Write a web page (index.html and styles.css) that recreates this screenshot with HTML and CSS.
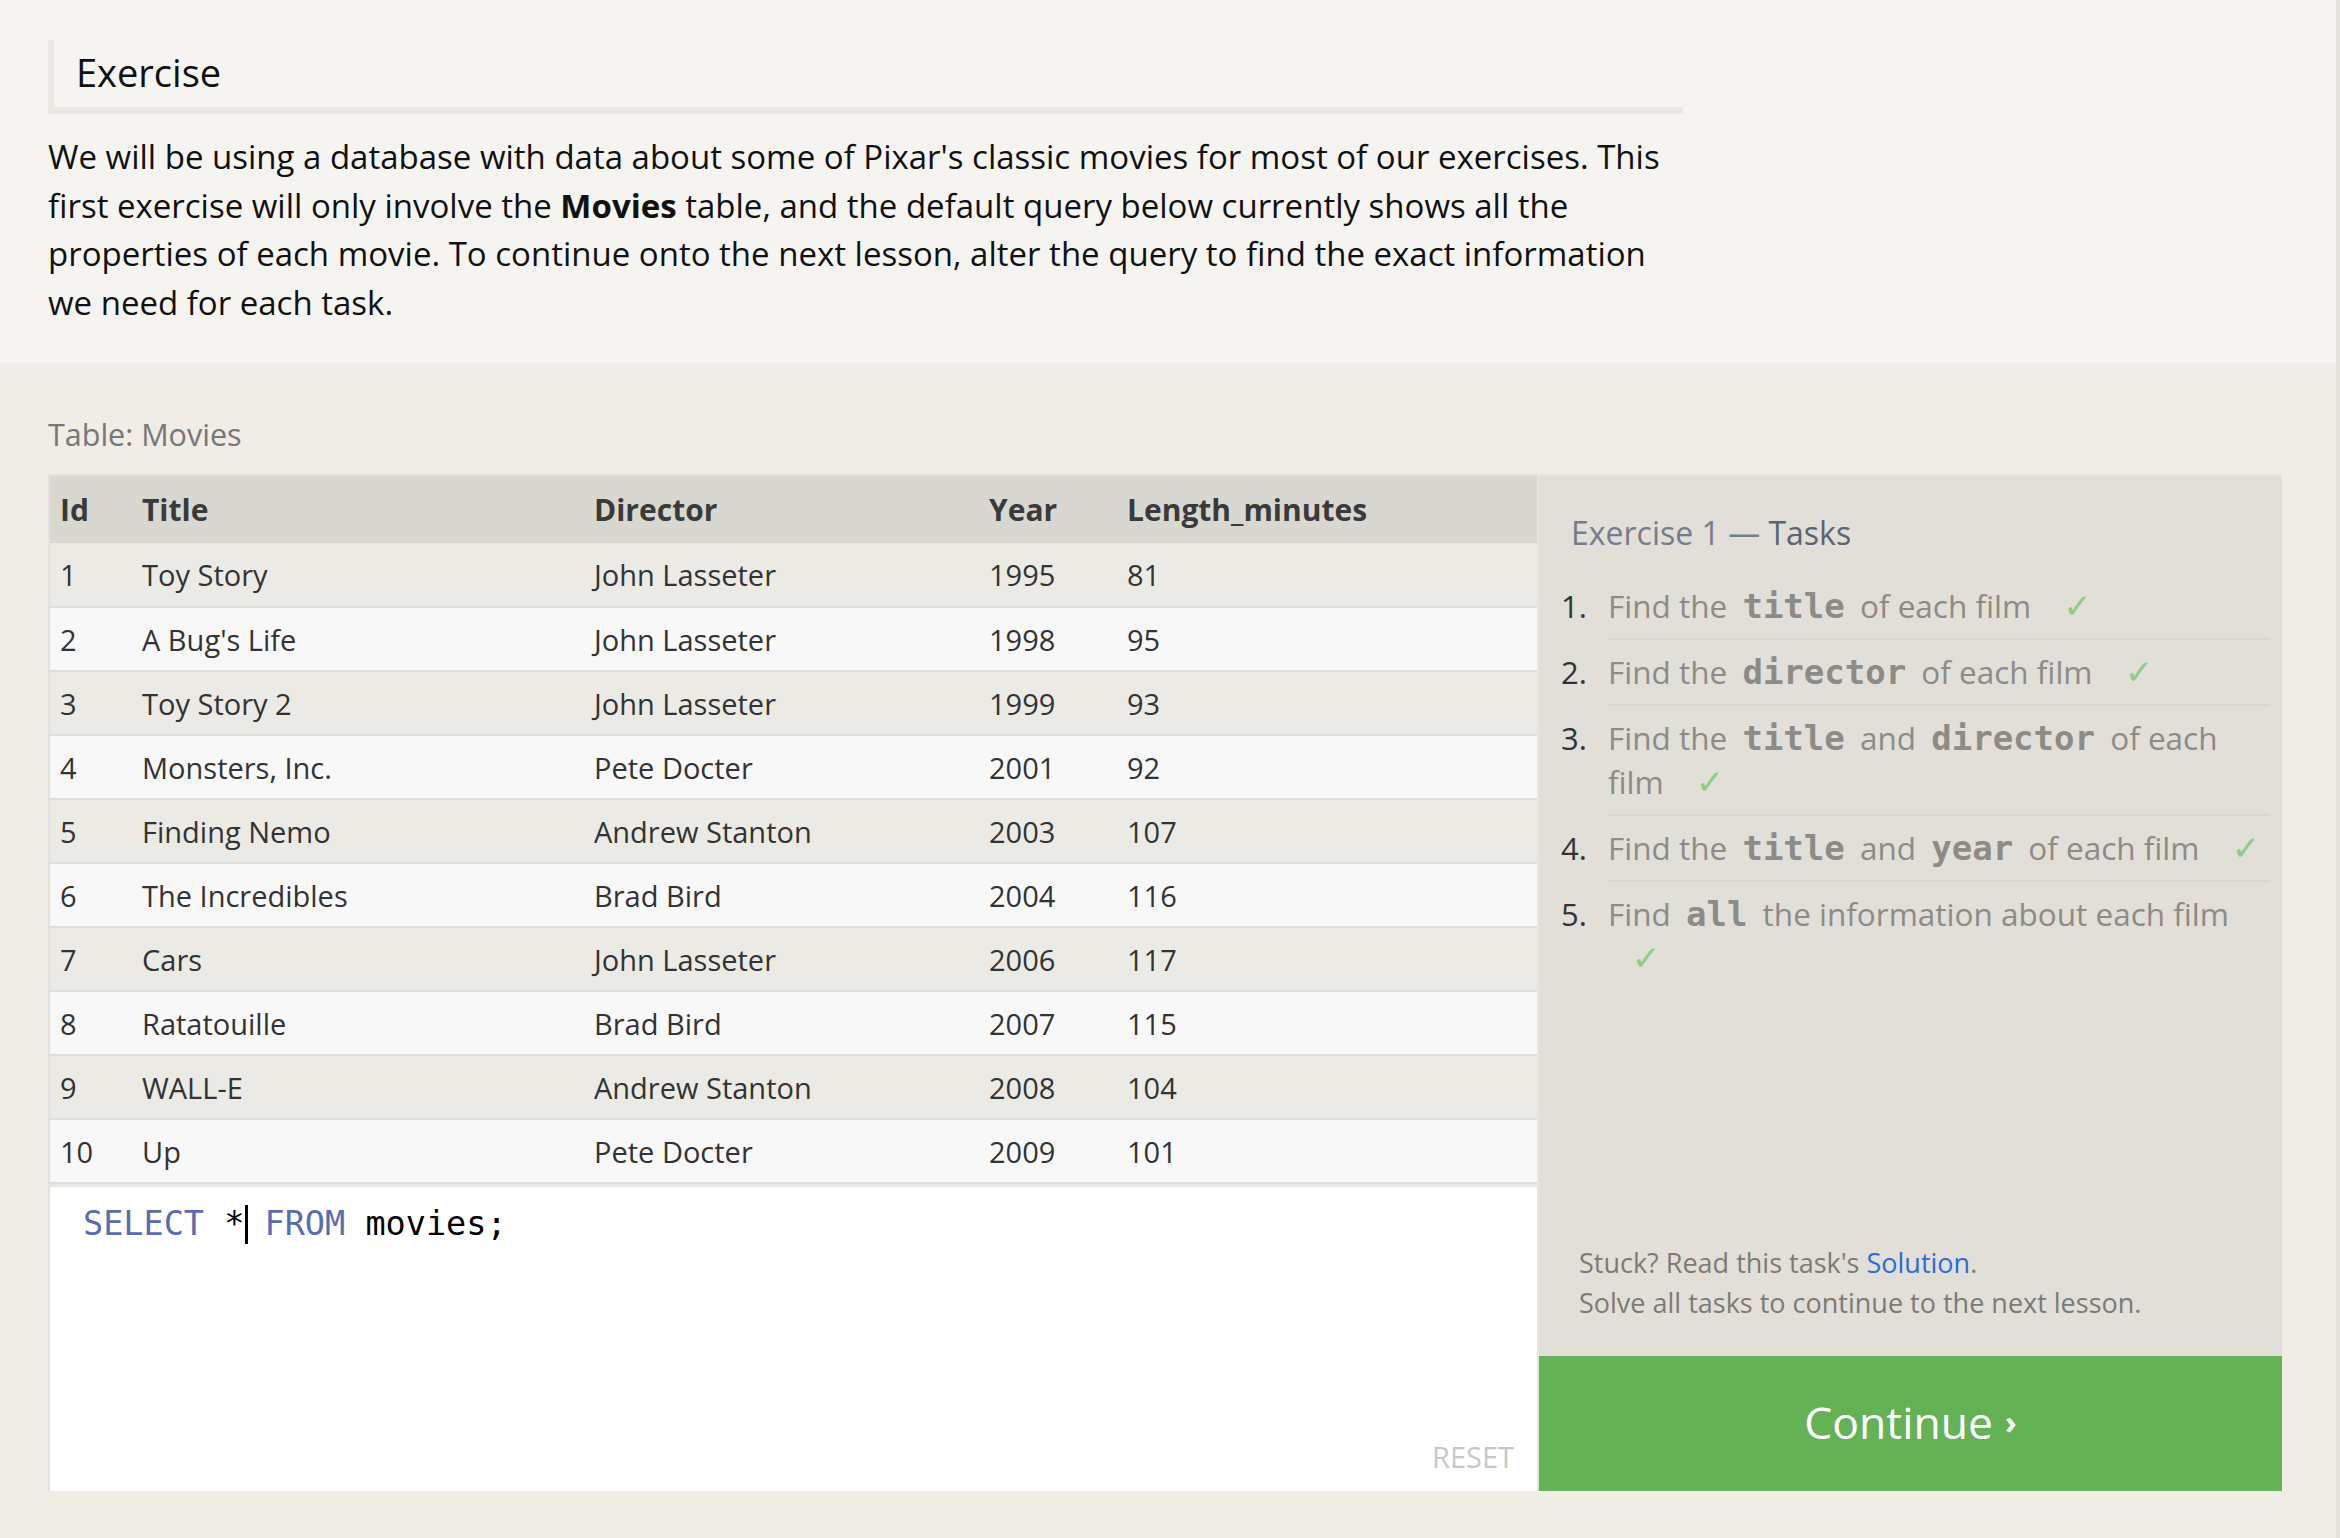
FILE: index.html
```html
<!DOCTYPE html>
<html lang="en">
<head>
<meta charset="utf-8">
<title>SQLBolt - Exercise 1</title>
<link rel="stylesheet" href="styles.css">
</head>
<body>
<div class="page">
  <section class="intro">
    <h2 class="exercise-heading">Exercise</h2>
    <p class="intro-text">We will be using a database with data about some of Pixar's classic movies for most of our exercises. This first exercise will only involve the <strong>Movies</strong> table, and the default query below currently shows all the properties of each movie. To continue onto the next lesson, alter the query to find the exact information we need for each task.</p>
  </section>

  <section class="workspace">
    <div class="table-label">Table: Movies</div>
    <div class="work-row">
      <div class="left-col">
        <table class="movies">
          <thead>
            <tr><th class="c-id">Id</th><th class="c-title">Title</th><th class="c-dir">Director</th><th class="c-year">Year</th><th class="c-len">Length_minutes</th></tr>
          </thead>
          <tbody>
            <tr><td>1</td><td>Toy Story</td><td>John Lasseter</td><td>1995</td><td>81</td></tr>
            <tr><td>2</td><td>A Bug's Life</td><td>John Lasseter</td><td>1998</td><td>95</td></tr>
            <tr><td>3</td><td>Toy Story 2</td><td>John Lasseter</td><td>1999</td><td>93</td></tr>
            <tr><td>4</td><td>Monsters, Inc.</td><td>Pete Docter</td><td>2001</td><td>92</td></tr>
            <tr><td>5</td><td>Finding Nemo</td><td>Andrew Stanton</td><td>2003</td><td>107</td></tr>
            <tr><td>6</td><td>The Incredibles</td><td>Brad Bird</td><td>2004</td><td>116</td></tr>
            <tr><td>7</td><td>Cars</td><td>John Lasseter</td><td>2006</td><td>117</td></tr>
            <tr><td>8</td><td>Ratatouille</td><td>Brad Bird</td><td>2007</td><td>115</td></tr>
            <tr><td>9</td><td>WALL-E</td><td>Andrew Stanton</td><td>2008</td><td>104</td></tr>
            <tr><td>10</td><td>Up</td><td>Pete Docter</td><td>2009</td><td>101</td></tr>
          </tbody>
        </table>
        <div class="editor">
          <div class="code"><span class="kw">SELECT</span> *<span class="cursor"></span> <span class="kw">FROM</span> movies;</div>
          <div class="reset">RESET</div>
        </div>
      </div>

      <aside class="tasks-panel">
        <h3 class="tasks-title"><span class="tasks-ex">Exercise 1 — </span><span class="tasks-word">Tasks</span></h3>
        <ol class="task-list">
          <li class="task"><span class="num">1.</span><div class="task-body">Find the <code>title</code> of each film <span class="check">✓</span></div></li>
          <li class="task"><span class="num">2.</span><div class="task-body">Find the <code>director</code> of each film <span class="check">✓</span></div></li>
          <li class="task"><span class="num">3.</span><div class="task-body">Find the <code>title</code> and <code>director</code> of each film <span class="check">✓</span></div></li>
          <li class="task"><span class="num">4.</span><div class="task-body">Find the <code>title</code> and <code>year</code> of each film <span class="check">✓</span></div></li>
          <li class="task"><span class="num">5.</span><div class="task-body">Find <code>all</code> the information about each film <span class="check">✓</span></div></li>
        </ol>
        <div class="help">
          <p>Stuck? Read this task's <a href="#" class="solution">Solution</a>.</p>
          <p>Solve all tasks to continue to the next lesson.</p>
        </div>
        <a href="#" class="continue">Continue <span class="chev">›</span></a>
      </aside>
    </div>
  </section>
</div>
</body>
</html>
```

FILE: styles.css
```css
* { box-sizing: border-box; }

html, body {
  margin: 0;
  padding: 0;
}

body {
  background: #efede6;
  font-family: "Open Sans", "Noto Sans", "DejaVu Sans", sans-serif;
  color: #111;
}

.page {
  min-height: 1538px;
  border-right: 4px solid #e3e1db;
  background: #efede6;
}

/* ---------- intro ---------- */
.intro {
  background: #f5f4f0;
  padding: 40px 0 36px 48px;
}

.exercise-heading {
  margin: 0;
  width: 1635px;
  height: 74px;
  border-left: 6px solid #e8e7e0;
  border-bottom: 7px solid #e8e7e0;
  padding: 7px 0 0 22px;
  font-size: 38px;
  font-weight: 400;
  line-height: 50px;
  color: #111;
}

.intro-text {
  margin: 19px 0 0 0;
  width: 1635px;
  font-size: 33px;
  line-height: 48.5px;
  color: #111;
}

.intro-text strong { font-weight: 700; }

/* ---------- workspace ---------- */
.workspace {
  padding: 48px 0 0 48px;
}

.table-label {
  font-size: 30.5px;
  line-height: 46px;
  color: #777;
  margin-bottom: 17px;
}

.work-row {
  display: flex;
  width: 2234px;
}

.left-col {
  width: 1489px;
  flex: none;
}

/* table */
.movies {
  width: 100%;
  border-collapse: collapse;
  border-left: 2px solid #e3e2dc;
  font-size: 29px;
  color: #333;
}

.movies th {
  background: #d9d8d0;
  text-align: left;
  font-weight: 700;
  font-size: 30px;
  height: 68px;
  padding: 0 0 0 10px;
  border-top: 2px solid #e3e2dc;
  color: #3a3a3a;
}

.movies td {
  height: 64px;
  padding: 0 0 0 10px;
  border-bottom: 2px solid #dededb;
}

.movies tbody tr:nth-child(odd) td { background: #ebeae4; }
.movies tbody tr:nth-child(even) td { background: #f8f8f8; }

.c-id { width: 83px; }
.c-title { width: 452px; }
.c-dir { width: 395px; }
.c-year { width: 138px; }

/* editor */
.editor {
  display: flex;
  flex-direction: column;
  height: 307px;
  background: #fff;
  border-top: 3px solid #e8e7e1;
  border-left: 2px solid #e3e2dc;
  padding: 13px 23px 14px 33px;
}

.code {
  font-family: "DejaVu Sans Mono", "Liberation Mono", monospace;
  font-size: 33.5px;
  line-height: 48px;
  color: #000;
  white-space: pre;
}

.kw { color: #5a6db3; }

.cursor {
  display: inline-block;
  width: 3px;
  height: 39px;
  background: #000;
  vertical-align: -9px;
  margin-left: 1px;
  margin-right: -4px;
}

.reset {
  margin-top: auto;
  align-self: flex-end;
  font-size: 29px;
  line-height: 40px;
  color: #c8c8c8;
}

/* ---------- tasks panel ---------- */
.tasks-panel {
  width: 745px;
  flex: none;
  display: flex;
  flex-direction: column;
  background: #e1dfd8;
  border-top: 2px solid #e6e5df;
  border-left: 2px solid #e6e5df;
}

.tasks-title {
  margin: 0;
  padding: 35px 0 0 32px;
  font-size: 32px;
  font-weight: 400;
  line-height: 44px;
}

.tasks-ex { color: #767c8d; }
.tasks-word { color: #5c6376; }

.task-list {
  list-style: none;
  margin: 19px 0 0 0;
  padding: 0 12px 0 22px;
}

.task {
  display: flex;
}

.num {
  width: 47px;
  flex: none;
  font-size: 31px;
  line-height: 44px;
  padding-top: 10px;
  color: #333;
}

.task-body {
  flex: 1;
  padding: 10px 0;
  font-size: 31.5px;
  line-height: 44px;
  color: #8d8b86;
  border-bottom: 2px solid #d8d6cf;
}

.task:last-child .task-body { border-bottom: none; }

.task-body code {
  font-family: "DejaVu Sans Mono", "Liberation Mono", monospace;
  font-weight: 700;
  font-size: 34px;
  line-height: 0;
  padding: 0 7px;
  color: #8d8b86;
}

.check {
  display: inline-block;
  margin-left: 24px;
  color: #8dcb87;
  font-family: "DejaVu Sans", sans-serif;
  font-size: 34px;
  line-height: 0;
}

.help {
  margin-top: auto;
  padding: 0 0 33px 40px;
  font-size: 27px;
  line-height: 40px;
  color: #7d7a75;
}

.help p { margin: 0; }

.solution {
  color: #2f6bd3;
  text-decoration: none;
}

.continue {
  display: flex;
  align-items: center;
  justify-content: center;
  height: 135px;
  padding-bottom: 5px;
  background: #65b256;
  color: #fff;
  font-size: 44.5px;
  text-decoration: none;
}

.chev {
  font-size: 32px;
  margin-left: 12px;
  font-weight: 700;
}
```
